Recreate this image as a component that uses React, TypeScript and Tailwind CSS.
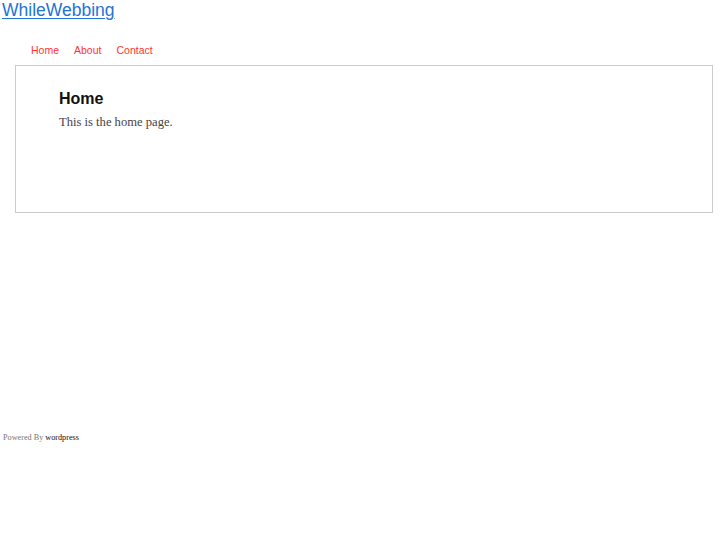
export default function App() {
  return (
    <div className="min-h-[545px] bg-white font-['Liberation_Sans',Arial,sans-serif]">
      <header className="pl-[2px]">
        <a href="#" className="block text-[17.5px] leading-[20px] text-[#1f74d6] underline underline-offset-[2px]">
          WhileWebbing
        </a>
      </header>

      <nav className="flex gap-[15px] pl-[31px] pt-[23px] text-[10.5px] leading-[14px] text-[#ff3333]">
        <a href="#">Home</a>
        <a href="#">About</a>
        <a href="#">Contact</a>
      </nav>

      <main className="ml-[15px] mt-[8px] h-[148px] w-[698px] border border-[#cccccc] pl-[43px] pt-[22px]">
        <h1 className="text-[16px] font-bold leading-[22px] text-[#111111]">Home</h1>
        <p className="mt-[4px] font-['Liberation_Serif',serif] text-[12.6px] leading-[16px] text-[#444444]">
          This is the home page.
        </p>
      </main>

      <footer className="mt-[220px] pl-[3px] font-['Liberation_Serif',serif] text-[8.2px] leading-[10px] text-[#777777]">
        Powered By <a href="#" className="text-[#111111]">wordpress</a>
      </footer>
    </div>
  );
}
